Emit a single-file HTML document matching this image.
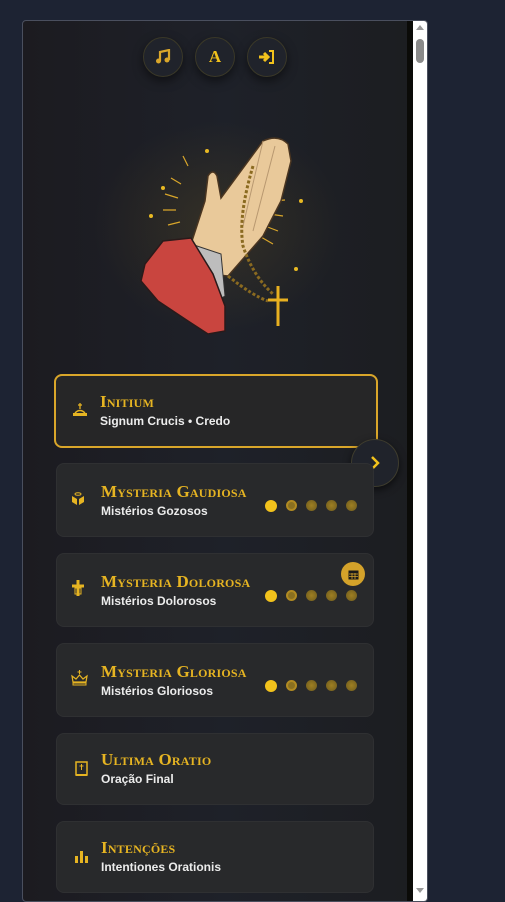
<!DOCTYPE html>
<html><head><meta charset="utf-8"><style>
*{margin:0;padding:0;box-sizing:border-box}
body{width:505px;height:902px;background:#1d2333;position:relative;overflow:hidden;font-family:"Liberation Sans",sans-serif}
.panel{position:absolute;left:22px;top:20px;width:406px;height:882px;border:1px solid #4a4f5e;border-radius:4px;background:linear-gradient(90deg,#1c1b20 0%,#1e2129 50%,#1c1d20 100%);overflow:hidden}
.strip{position:absolute;left:384px;top:0;width:6px;height:100%;background:#0b0b08}
.sb{position:absolute;left:390px;top:0;width:15px;height:100%;background:#fff}
.thumb{position:absolute;left:3px;top:18px;width:8px;height:24px;border-radius:4px;background:#8a8a8a}
.btn{position:absolute;width:40px;height:40px;border-radius:50%;background:#20232b;border:1px solid #3a3828;box-shadow:0 4px 10px rgba(0,0,0,.5);display:flex;align-items:center;justify-content:center}
.card{position:absolute;left:33px;width:318px;background:#28292b;border-radius:8px;border:1px solid #2f3032}
.card.act{left:31px;width:324px;border:2px solid #d9a62a;background:#262627}
.t{position:absolute;left:44px;font-family:"Liberation Serif",serif;font-variant:small-caps;color:#e6b422;font-size:17px;letter-spacing:.2px;font-weight:bold}
.s{position:absolute;left:44px;color:#ececec;font-weight:bold;font-size:12px}
.ic{position:absolute;left:14px}
.dots{position:absolute;right:16px;display:flex;gap:9px}
.d{width:11px;height:11px;border-radius:50%;background:radial-gradient(#9e7f22,#6e5a1e)}
.d.f{background:#f2c21c;width:12px;height:12px}
.d.h{background:#8a7020;border:2px solid #b08a22}
</style></head><body>
<div class="panel">
<div class="btn" style="left:120px;top:16px"><svg width="16" height="16" viewBox="0 0 16 16"><path d="M5 12V3l9-2v10" stroke="#d9a62a" stroke-width="2.2" fill="none"/><circle cx="3.5" cy="12" r="2.5" fill="#d9a62a"/><circle cx="12" cy="11" r="2.5" fill="#d9a62a"/></svg></div>
<div class="btn" style="left:172px;top:16px"><span style="color:#f2c21c;font-family:'Liberation Serif',serif;font-weight:bold;font-size:17px">A</span></div>
<div class="btn" style="left:224px;top:16px"><svg width="18" height="16" viewBox="0 0 18 16"><path d="M1 8h8M6 4l4 4-4 4" stroke="#f2c21c" stroke-width="3" fill="none"/><path d="M11 2h4v12h-4" stroke="#f2c21c" stroke-width="2" fill="none"/></svg></div>

<div style="position:absolute;left:60px;top:90px;width:270px;height:230px;background:radial-gradient(ellipse at 50% 50%,rgba(120,95,30,.25),rgba(0,0,0,0) 65%)"></div>
<svg style="position:absolute;left:90px;top:105px" width="200" height="210" viewBox="0 0 200 210">
<g stroke="#d9a62a" stroke-width="1.2"><path d="M58 52l10 6M52 68l13 4M50 84l13 0M55 99l12-3M70 30l5 10M172 60l-14 4M172 74l-14 1M170 90l-14-2M165 105l-13-5M160 118l-12-7"/></g>
<g fill="#e8b923"><circle cx="94" cy="25" r="2"/><circle cx="50" cy="62" r="2"/><circle cx="188" cy="75" r="2"/><circle cx="38" cy="90" r="2"/><circle cx="183" cy="143" r="2"/></g>
<path d="M78 118 L92 75 L95 50 Q100 42 104 50 L108 72 L150 15 Q165 8 175 18 L178 35 L168 75 L150 110 L115 150 L95 148 Z" fill="#e9c99a" stroke="#4a3520" stroke-width="1.5"/>
<path d="M150 15 L130 100 M162 20 L140 105" stroke="#b89870" stroke-width="1"/>
<path d="M78 118 L108 128 L112 170 L98 178 Z" fill="#bdbdbd" stroke="#333"/>
<path d="M32 138 L50 115 L78 112 L100 148 L112 180 L112 205 L95 208 L75 195 L45 175 L28 155 Z" fill="#c9453f" stroke="#2a1a1a" stroke-width="1.5"/>
<path d="M140 40 Q125 90 130 120 Q140 150 160 168 M115 150 Q140 170 155 175" stroke="#8a6a20" stroke-width="3" fill="none" stroke-dasharray="3 2"/>
<path d="M165 160v40M155 174h20" stroke="#e8b020" stroke-width="3"/>
</svg>

<div class="card act" style="top:353px;height:74px"><svg class="ic" style="top:27px;left:16px" width="16" height="14" viewBox="0 0 16 14"><path d="M8 0v6M6 2h4" stroke="#e6b422" stroke-width="1.3"/><path d="M3 10Q8 5 13 10" stroke="#e6b422" fill="none" stroke-width="1.5"/><rect x="1" y="10" width="14" height="3" fill="#e6b422"/></svg><div class="t" style="top:16px">Initium</div><div class="s" style="top:38px">Signum Crucis • Credo</div></div>
<div style="position:absolute;left:328px;top:418px;width:48px;height:48px;border-radius:50%;background:#20232b;border:1px solid #3e3c2e;box-shadow:0 3px 8px rgba(0,0,0,.6);display:flex;align-items:center;justify-content:center"><svg width="14" height="16" viewBox="0 0 14 16"><path d="M4 2l6 6-6 6" stroke="#f2c21c" stroke-width="2.5" fill="none"/></svg></div>

<div class="card" style="top:442px;height:74px"><svg class="ic" style="top:28px" width="14" height="14" viewBox="0 0 14 14"><ellipse cx="7" cy="2" rx="3" ry="1.3" fill="none" stroke="#e6b422"/><path d="M1 4l5 3v6L1 10zM13 4l-5 3v6l5-3z" fill="#e6b422"/></svg><div class="t" style="top:18px">Mysteria Gaudiosa</div><div class="s" style="top:40px">Mistérios Gozosos</div><div class="dots" style="top:36px"><div class="d f"></div><div class="d h"></div><div class="d"></div><div class="d"></div><div class="d"></div></div></div>
<div class="card" style="top:532px;height:74px"><svg class="ic" style="top:26px" width="14" height="16" viewBox="0 0 14 16"><path d="M7 0v16M1 6h12" stroke="#e6b422" stroke-width="3"/><rect x="4" y="8" width="6" height="6" fill="none" stroke="#e6b422"/></svg><div class="t" style="top:18px">Mysteria Dolorosa</div><div class="s" style="top:40px">Mistérios Dolorosos</div><div class="dots" style="top:36px"><div class="d f"></div><div class="d h"></div><div class="d"></div><div class="d"></div><div class="d"></div></div>
<div style="position:absolute;right:8px;top:8px;width:24px;height:24px;border-radius:50%;background:#d4a22a;display:flex;align-items:center;justify-content:center"><svg width="11" height="11" viewBox="0 0 11 11"><rect x="0.5" y="1.5" width="10" height="9" fill="#1a1a1a"/><path d="M1 5h9M1 7.5h9M4 4v6M7 4v6" stroke="#d4a22a" stroke-width=".8"/></svg></div></div>
<div class="card" style="top:622px;height:74px"><svg class="ic" style="top:26px" width="17" height="16" viewBox="0 0 17 16"><path d="M8.5 0v4M6.5 2h4" stroke="#e6b422"/><path d="M2 12L1 6l4 3 3.5-4 3.5 4 4-3-1 6z" fill="none" stroke="#e6b422" stroke-width="1.2"/><rect x="2" y="13" width="13" height="2" fill="none" stroke="#e6b422"/></svg><div class="t" style="top:18px">Mysteria Gloriosa</div><div class="s" style="top:40px">Mistérios Gloriosos</div><div class="dots" style="top:36px"><div class="d f"></div><div class="d h"></div><div class="d"></div><div class="d"></div><div class="d"></div></div></div>
<div class="card" style="top:712px;height:72px"><svg class="ic" style="top:27px;left:18px" width="13" height="16" viewBox="0 0 13 16"><rect x="1" y="1" width="11" height="13" fill="none" stroke="#e6b422" stroke-width="1.5"/><rect x="1" y="13" width="11" height="2" fill="#e6b422"/><path d="M6.5 3v6M4.5 5h4" stroke="#e6b422"/></svg><div class="t" style="top:16px">Ultima Oratio</div><div class="s" style="top:38px">Oração Final</div></div>
<div class="card" style="top:800px;height:72px"><svg class="ic" style="top:26px;left:18px" width="13" height="16" viewBox="0 0 13 16"><rect x="0" y="8" width="3" height="7" fill="#e6b422"/><rect x="5" y="3" width="3" height="12" fill="#e6b422"/><rect x="10" y="8" width="3" height="7" fill="#e6b422"/></svg><div class="t" style="top:16px">Intenções</div><div class="s" style="top:38px">Intentiones Orationis</div></div>

<div class="strip"></div>
<div class="sb"><div style="position:absolute;left:3px;top:4px;border:4px solid transparent;border-bottom:5px solid #999;border-top:0"></div><div class="thumb"></div><div style="position:absolute;left:3px;bottom:8px;border:4px solid transparent;border-top:5px solid #999;border-bottom:0"></div></div>
</div>
</body></html>
